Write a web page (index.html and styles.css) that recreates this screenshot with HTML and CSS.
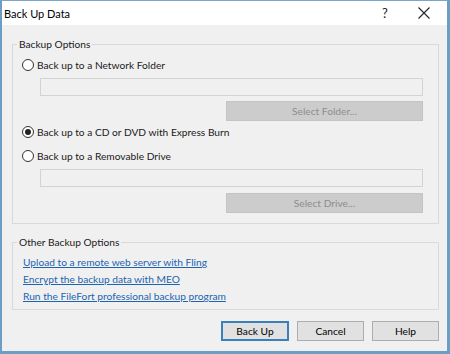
FILE: index.html
```html
<!DOCTYPE html>
<html>
<head>
<meta charset="utf-8">
<link rel="stylesheet" href="styles.css">
</head>
<body>
<div class="window">
  <div class="titlebar">
    <span class="title">Back Up Data</span>
    <span class="help">?</span>
    <span class="close">
      <svg width="12" height="12" viewBox="0 0 12 12"><path d="M0.5 0.5 L11.5 11.5 M11.5 0.5 L0.5 11.5" stroke="#222" stroke-width="1.1" fill="none"/></svg>
    </span>
  </div>
  <div class="content">
    <fieldset class="group group-main">
      <legend>Backup Options</legend>
      <div class="group-body">
        <div class="radio-row row-1"><span class="radio"></span>Back up to a Network Folder</div>
        <div class="textbox"></div>
        <div class="btn-row"><span class="btn btn-disabled">Select Folder...</span></div>
        <div class="radio-row row-2"><span class="radio checked"></span>Back up to a CD or DVD with Express Burn</div>
        <div class="radio-row row-3"><span class="radio"></span>Back up to a Removable Drive</div>
        <div class="textbox tb-2"></div>
        <div class="btn-row"><span class="btn btn-disabled">Select Drive...</span></div>
      </div>
    </fieldset>
    <fieldset class="group group-other">
      <legend>Other Backup Options</legend>
      <div class="group-body links">
        <a class="link">Upload to a remote web server with Fling</a>
        <a class="link">Encrypt the backup data with MEO</a>
        <a class="link">Run the FileFort professional backup program</a>
      </div>
    </fieldset>
    <div class="actions">
      <span class="btn btn-default">Back Up</span>
      <span class="btn">Cancel</span>
      <span class="btn">Help</span>
    </div>
  </div>
</div>
</body>
</html>
```
FILE: styles.css
```css
* { box-sizing: border-box; }
html, body { margin: 0; padding: 0; }
body {
  font-family: Lato, "Noto Sans", sans-serif;
  font-size: 10.2px;
  color: #1a1a1a;
  background: #f0f0f0;
}
.window {
  width: 450px;
  height: 354px;
  border-top: 1px solid #7aa6c8;
  border-left: 2px solid #6d9dc2;
  border-right: 3px solid #6d9dc2;
  border-bottom: 3px solid #6d9dc2;
  display: flex;
  flex-direction: column;
  background: #f0f0f0;
}
.titlebar {
  height: 24px;
  background: #fff;
  display: flex;
  align-items: center;
  flex-shrink: 0;
}
.title {
  flex: 1;
  padding-left: 2px;
  font-size: 11px;
  color: #000;
}
.help {
  width: 30px;
  text-align: center;
  font-size: 13px;
  color: #222;
}
.close {
  width: 47px;
  height: 24px;
  display: flex;
  align-items: center;
  justify-content: center;
}
.content {
  flex: 1;
  padding: 0 8px 0 10px;
  display: flex;
  flex-direction: column;
}
.group {
  margin: 0;
  padding: 0;
  border: 1px solid #d9d9d9;
  min-width: 0;
}
.group legend {
  margin-left: 4px;
  padding: 0 2px;
  line-height: 14px;
  height: 14px;
}
.group-main { margin-top: 12px; }
.group-main .group-body {
  padding: 6px 15px 10px 9px;
  display: flex;
  flex-direction: column;
}
.radio-row {
  height: 16px;
  display: flex;
  align-items: center;
  white-space: nowrap;
}
.row-2 { margin-top: 3px; }
.row-3 { margin-top: 8px; }
.radio {
  width: 12px;
  height: 12px;
  border: 1px solid #333;
  border-radius: 50%;
  background: #fff;
  margin-right: 3px;
  position: relative;
  flex-shrink: 0;
}
.radio.checked::after {
  content: "";
  position: absolute;
  left: 2px; top: 2px;
  width: 6px; height: 6px;
  border-radius: 50%;
  background: #222;
}
.textbox {
  margin: 5px 0 0 18px;
  height: 18px;
  border: 1px solid #d3d3d3;
  background: #f0f0f0;
}
.btn-row {
  display: flex;
  justify-content: flex-end;
  margin-top: 5px;
}
.group-main .btn-row:last-child { margin-top: 6px; }
.btn {
  height: 20px;
  width: 67px;
  display: flex;
  align-items: center;
  justify-content: center;
  border: 1px solid #adadad;
  background: #e1e1e1;
  color: #000;
  white-space: nowrap;
}
.btn-disabled {
  width: 197px;
  background: #cccccc;
  border-color: #c4c4c4;
  color: #8d8d8d;
}
.group-other { margin-top: 11px; }
.links {
  padding: 5px 0 4px 10px;
  display: flex;
  flex-direction: column;
}
.link {
  height: 17px;
  line-height: 17px;
  color: #1c64b0;
  text-decoration: underline;
  white-space: nowrap;
}
.actions {
  margin-top: 11px;
  display: flex;
  justify-content: flex-end;
  gap: 8px;
}
.btn-default {
  width: 68px;
  border: 2px solid #3b80b8;
}
```
